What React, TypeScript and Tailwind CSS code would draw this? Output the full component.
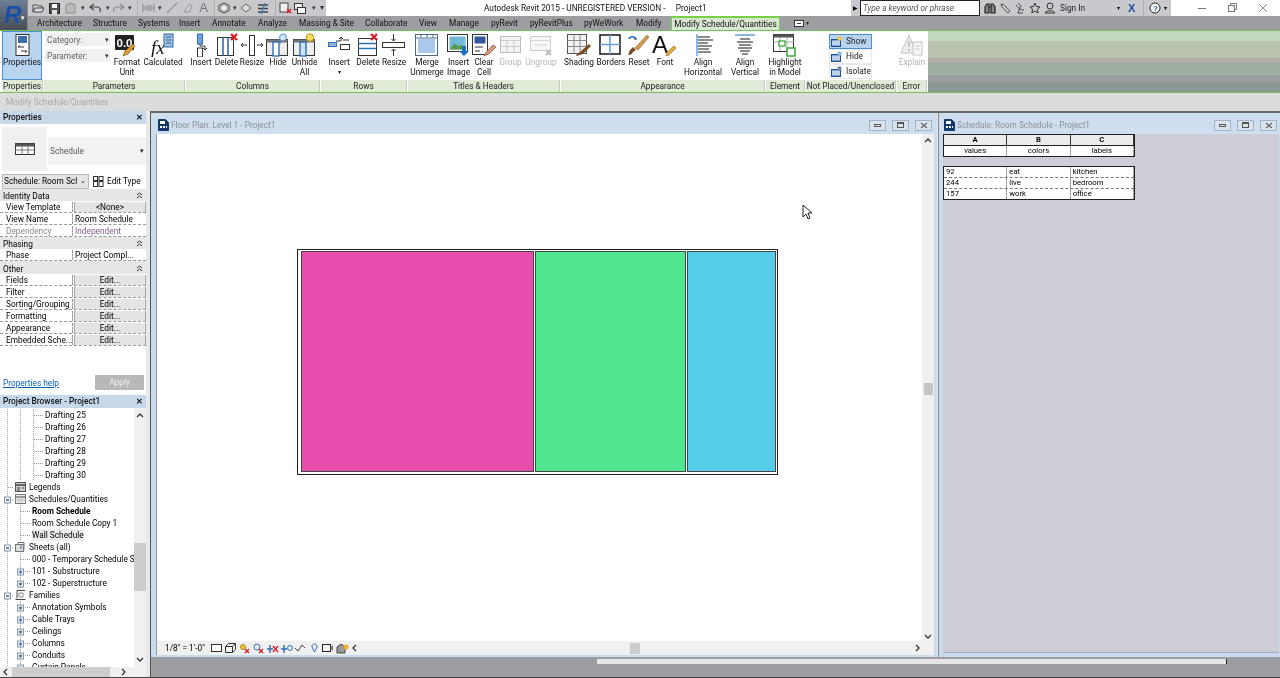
import { FC, ReactNode } from "react";

const FONT = "font-['Roboto','Liberation_Sans',sans-serif]";

type SvgProps = { w?: number; h?: number; children: ReactNode; className?: string };

const Ico: FC<SvgProps> = ({ w = 24, h = 24, children, className }) => (
  <svg width={w} height={h} viewBox={`0 0 ${w} ${h}`} fill="none" className={`shrink-0 ${className ?? ""}`}>
    {children}
  </svg>
);

const INK = "#333";
const BLUE = "#2f6fb5";
const RED = "#d8202a";

/* ── Ribbon icons ─────────────────────────────────── */
const icons: Record<string, ReactNode> = {
  properties: (
    <Ico>
      <rect x="6" y="1.5" width="13" height="21" fill="#fff" stroke={INK} />
      <rect x="8" y="3" width="9" height="7" fill="#3a6ea8" />
      <path d="M8 14h6M11 18h6M8 14l2-1.5M17 18l-2 1.5" stroke={INK} />
    </Ico>
  ),
  format: (
    <Ico w={28}>
      <rect x="2" y="2" width="19" height="15" rx="1" fill="#222" />
      <text x="3.500" y="14" fontSize="11.500" fill="#fff" fontFamily="Liberation Sans" fontWeight="700">0.0</text>
      <path d="M10 23l2-5 8-7 2 2-7 8z" fill="#e0a030" stroke="#704010" strokeWidth=".6" />
    </Ico>
  ),
  calc: (
    <Ico w={28}>
      <text x="2" y="21" fontSize="19" fill="#111" fontFamily="Liberation Serif" fontStyle="italic">fx</text>
      <rect x="15" y="1" width="9" height="13" fill="#9cc0e4" stroke="#35689c" />
      <path d="M17 4h5M17 7h5M17 10h5" stroke="#35689c" />
    </Ico>
  ),
  colInsert: (
    <Ico>
      <rect x="8.500" y="1" width="5" height="10" fill="#6f9fd8" stroke={BLUE} />
      <rect x="8.500" y="15" width="5" height="9" fill="#fff" stroke={INK} />
      <path d="M11 11v2h5v4M14 15l2 2 2-2" stroke={INK} />
    </Ico>
  ),
  colDelete: (
    <Ico>
      <rect x="2.5" y="4.5" width="16" height="18" fill="#fff" stroke={INK} />
      <path d="M8 4.500v18M13 4.500v18" stroke={BLUE} strokeWidth="1.600" />
      <path d="M16 1l6 6M22 1l-6 6" stroke={RED} strokeWidth="2.400" />
    </Ico>
  ),
  colResize: (
    <Ico>
      <rect x="9.500" y="2.500" width="5" height="20" fill="#fff" stroke={INK} />
      <path d="M1 12h6M3 10l-2 2 2 2M23 12h-6M21 10l2 2-2 2" stroke={INK} />
    </Ico>
  ),
  colHide: (
    <Ico w={26}>
      <rect x="1.500" y="6.500" width="21" height="16" fill="#eee" stroke={INK} />
      <rect x="1.500" y="6.500" width="21" height="3" fill="#777" />
      <rect x="8" y="9" width="6" height="14" fill="#fff" stroke={BLUE} strokeWidth="1.400" />
      <circle cx="18" cy="4.500" r="3.500" fill="#cfe6fa" stroke="#5a90c8" />
      <path d="M16 8l-1 3" stroke="#5a90c8" />
    </Ico>
  ),
  colUnhide: (
    <Ico w={26}>
      <rect x="1.500" y="6.500" width="21" height="16" fill="#eee" stroke={INK} />
      <rect x="1.500" y="6.500" width="21" height="3" fill="#777" />
      <rect x="8" y="9" width="6" height="14" fill="#cfe0f4" stroke={BLUE} strokeWidth="1.400" />
      <circle cx="18" cy="4.500" r="3.800" fill="#f7d860" stroke="#c09820" />
    </Ico>
  ),
  rowInsert: (
    <Ico w={26}>
      <rect x="2.500" y="9.500" width="8" height="4" fill="#8fb4e0" stroke={BLUE} />
      <rect x="14.500" y="11.500" width="9" height="5" fill="#fff" stroke={INK} />
      <path d="M10 8h5V5M13 6l2-2 2 2M17 7h6" stroke={INK} />
    </Ico>
  ),
  rowDelete: (
    <Ico>
      <rect x="2.500" y="5.500" width="18" height="17" fill="#fff" stroke={INK} />
      <path d="M2.500 10.500h18M2.500 15.500h18" stroke={BLUE} strokeWidth="1.600" />
      <path d="M15 1l6 6M21 1l-6 6" stroke={RED} strokeWidth="2.400" />
    </Ico>
  ),
  rowResize: (
    <Ico w={26}>
      <rect x="1.500" y="9.500" width="22" height="5" fill="#fff" stroke={INK} />
      <path d="M12.500 1v7M10.500 6l2 2 2-2M12.500 23v-7M10.500 18l2-2 2 2" stroke={INK} />
    </Ico>
  ),
  merge: (
    <Ico w={26}>
      <rect x="1.500" y="1.500" width="22" height="21" fill="#fff" stroke="#4a6a8a" />
      <rect x="4" y="6" width="17" height="14" fill="#a9c9ea" />
      <path d="M1.500 5h22M7 1.500v3M13 1.500v3M19 1.500v3" stroke="#4a6a8a" />
    </Ico>
  ),
  image: (
    <Ico w={26}>
      <rect x="1.500" y="1.500" width="20" height="17" fill="#fff" stroke={INK} />
      <rect x="3.500" y="3.500" width="16" height="13" fill="#72b8d8" />
      <path d="M3.500 16.500l5-6 4 3 3-2 4 5z" fill="#5c9a4a" />
      <path d="M16 13h4v5h3l-5 5-5-5h3z" fill="#2070c0" />
    </Ico>
  ),
  clear: (
    <Ico w={26}>
      <rect x="1.500" y="1.500" width="15" height="20" fill="#fff" stroke={INK} />
      <rect x="3.500" y="3.500" width="11" height="7" fill="#33589c" />
      <path d="M4 14h8M4 18h5" stroke={INK} />
      <path d="M13 23l2-4 7-7 3 2-7 7z" fill="#d89880" stroke="#804020" strokeWidth=".6" />
    </Ico>
  ),
  group: (
    <Ico w={26}>
      <rect x="2.500" y="3.500" width="20" height="16" fill="#f4f4f4" stroke="#bbb" />
      <path d="M2.500 7.500h20M9 7.500v12M16 7.500v12M2.500 13.500h20" stroke="#ccc" />
    </Ico>
  ),
  ungroup: (
    <Ico w={26}>
      <rect x="2.500" y="3.500" width="20" height="14" fill="#f7f7f7" stroke="#ccc" />
      <path d="M2.500 7.500h20M6 12h13" stroke="#d5d5d5" />
      <path d="M18 17l5 5M23 17l-5 5" stroke="#bbb" strokeWidth="2" />
    </Ico>
  ),
  shading: (
    <Ico w={26}>
      <rect x="1.500" y="1.500" width="19" height="19" fill="#f2f2f2" stroke="#555" />
      <path d="M1.500 7.500h19M1.500 13.500h19M8 1.500v19M14 1.500v19" stroke="#888" />
      <path d="M10 23c1-3 3-3 4-4l9-8 2 2-8 8c-2 1-4 1-7 2z" fill="#7a4a22" />
    </Ico>
  ),
  borders: (
    <Ico w={26}>
      <rect x="2" y="2" width="20" height="19" fill="#fff" stroke="#222" strokeWidth="1.600" />
      <path d="M12 2v19M2 11.500h20" stroke="#6ca0dc" strokeWidth="1.600" />
    </Ico>
  ),
  reset: (
    <Ico w={26}>
      <path d="M3 6c1-3 6-3 7 0l-2 0" stroke={BLUE} strokeWidth="1.600" />
      <path d="M2 22c3 0 4-1 5-3l3-2-3-3-3 3c-1 2-1 3-2 5z" fill="#7a4a22" />
      <path d="M9 15L21 2l2 2-11 13z" fill="#d49a50" stroke="#704010" strokeWidth=".5" />
    </Ico>
  ),
  font: (
    <Ico w={26}>
      <text x="0" y="20" fontSize="24" fill="#111" fontFamily="Liberation Sans">A</text>
      <path d="M14 23l1-4 7-6 2 2-7 7z" fill="#e4b040" stroke="#704010" strokeWidth=".5" />
    </Ico>
  ),
  alignH: (
    <Ico>
      <path d="M6 1v22" stroke="#5090d0" strokeWidth="1.300" />
      <path d="M7 4h12M7 7h15M7 10h10M7 13h14M7 16h11M7 19h13" stroke="#666" strokeWidth="1.400" />
    </Ico>
  ),
  alignV: (
    <Ico>
      <path d="M2 2h20" stroke="#5090d0" strokeWidth="1.300" />
      <path d="M7 6h10M4 9h16M6 12h12M5 15h14M7 18h10M9 21h6" stroke="#666" strokeWidth="1.400" />
    </Ico>
  ),
  highlight: (
    <Ico w={26}>
      <rect x="1.500" y="1.500" width="20" height="17" fill="#fff" stroke={INK} />
      <rect x="1.500" y="1.500" width="20" height="3" fill="#555" />
      <path d="M1.500 9h20M8 5v13M15 5v13" stroke="#aaa" />
      <rect x="7" y="8" width="6" height="5" fill="#fff" stroke="#38a838" strokeWidth="1.300" />
      <rect x="15" y="15" width="8" height="8" fill="#fff" stroke="#38a838" strokeWidth="1.500" />
    </Ico>
  ),
  explain: (
    <Ico w={26}>
      <path d="M10 2L2 20h15z" fill="#eee" stroke="#c4c4c4" />
      <path d="M10 8v6M10 16v2" stroke="#bbb" strokeWidth="1.600" />
      <rect x="14" y="9" width="9" height="13" fill="#f6f6f6" stroke="#c4c4c4" />
      <path d="M16 13h5M16 16h5" stroke="#ccc" />
    </Ico>
  ),
};

/* ── Ribbon pieces ────────────────────────────────── */
const RibbonBtn: FC<{ icon: string; w: number; lines: string[]; off?: boolean; caret?: boolean; sel?: boolean }> = ({
  icon,
  w,
  lines,
  off,
  caret,
  sel,
}) => (
  <div
    style={{ width: w }}
    className={`flex flex-col items-center shrink-0 leading-[10px] ${off ? "text-[#b4b4b4]" : "text-[#111]"} ${
      sel ? "bg-[#b9d4ef] border border-[#4d8fd0] pt-[1px]" : "pt-[2px]"
    }`}
  >
    <div className="h-[24px] flex items-center justify-center">{icons[icon]}</div>
    {lines.map(l => (
      <span key={l} className="whitespace-nowrap">
        {l}
      </span>
    ))}
    {caret && <span className="text-[6px] leading-[6px] mt-[2px]">▾</span>}
  </div>
);

const Panel: FC<{ title: string; w: number; children: ReactNode }> = ({ title, w, children }) => (
  <div style={{ width: w }} className="flex flex-col shrink-0 border-r border-white">
    <div className="h-[49px] flex bg-white overflow-hidden">{children}</div>
    <div className="h-[12px] bg-[#dfebd7] border-r border-[#c8c8c8] text-center leading-[12px] text-[#222] whitespace-nowrap overflow-hidden">
      {title}
    </div>
  </div>
);

const TABS: [string, number][] = [
  ["Architecture", 43],
  ["Structure", 32],
  ["Systems", 28],
  ["Insert", 20],
  ["Annotate", 33],
  ["Analyze", 28],
  ["Massing & Site", 53],
  ["Collaborate", 41],
  ["View", 17],
  ["Manage", 29],
  ["pyRevit", 26],
  ["pyRevitPlus", 41],
  ["pyWeWork", 39],
  ["Modify", 23],
];

const QatBtn: FC<{ children: ReactNode; w: number }> = ({ children, w }) => (
  <div style={{ width: w }} className="h-[16px] flex items-center justify-center shrink-0">
    {children}
  </div>
);

const Caret = () => <span className="w-[9px] text-center text-[7px] leading-[16px] text-[#333] shrink-0">▾</span>;
const Sep = () => <div className="w-px h-[16px] bg-[#b0b0b0] mx-[3px] shrink-0" />;

const TopBars = () => (
  <div className="flex h-[30px] shrink-0">
    <div className="w-[28px] h-[30px] shrink-0 bg-gradient-to-b from-[#6d7f96] to-[#4a4d55] flex items-center border-r border-[#888] relative">
      <span className="ml-[4px] font-['Liberation_Sans'] font-bold italic text-[24px] leading-[24px] text-[#1750a8]">R</span>
      <span className="absolute right-[2px] bottom-[8px] text-[7px] leading-[7px] text-white">▾</span>
    </div>
    <div className="flex-1 flex flex-col min-w-0">
      <div className="h-[16px] flex bg-white">
        <div className="w-[298px] flex items-center bg-[#c9c9cd] pl-[2px] shrink-0">
          <QatBtn w={16}>
            <Ico w={12} h={10}><path d="M1 9V2h4l1 1h4v2M1 9l2-4h9l-2 4z" fill="#ddd" stroke="#444" /></Ico>
          </QatBtn>
          <QatBtn w={16}>
            <Ico w={11} h={11}><path d="M.5.5h10v10H.5z" fill="#555" stroke="#222" /><rect x="3" y="1" width="5" height="4" fill="#fff" /><rect x="3" y="7" width="5" height="4" fill="#ddd" /></Ico>
          </QatBtn>
          <QatBtn w={16}>
            <Ico w={12} h={12}><path d="M2 11V3l5-2 4 2v8z" fill="#bbb" stroke="#888" /></Ico>
          </QatBtn>
          <Caret />
          <QatBtn w={16}>
            <Ico w={13} h={10}><path d="M5 1L1 4l4 3M1 4h7c3 0 4 2 3 5" stroke="#444" strokeWidth="1.200" /></Ico>
          </QatBtn>
          <Caret />
          <QatBtn w={13}>
            <Ico w={13} h={10}><path d="M8 1l4 3-4 3M12 4H5C2 4 1 6 2 9" stroke="#888" strokeWidth="1.100" /></Ico>
          </QatBtn>
          <Caret />
          <Sep />
          <QatBtn w={14}>
            <Ico w={13} h={10}><path d="M1 1v8M12 1v8M1 5h11M3 3h7M3 7h7" stroke="#888" /></Ico>
          </QatBtn>
          <Caret />
          <QatBtn w={16}>
            <Ico w={13} h={12}><path d="M2 10l9-9" stroke="#999" strokeWidth="1.400" /><circle cx="2" cy="10" r="1.500" fill="#aaa" /></Ico>
          </QatBtn>
          <QatBtn w={16}>
            <Ico w={12} h={12}><path d="M2 10l5-8 3 2-2 6z" stroke="#999" /></Ico>
          </QatBtn>
          <span className="w-[15px] text-center text-[13px] leading-[16px] text-[#777] font-['Liberation_Sans'] shrink-0">A</span>
          <Sep />
          <QatBtn w={12}>
            <Ico w={12} h={12}><path d="M6 1l5 2.500v5L6 11 1 8.500v-5z" fill="#bbb" stroke="#444" /><circle cx="6" cy="6" r="2" fill="#fff" /></Ico>
          </QatBtn>
          <Caret />
          <QatBtn w={14}>
            <Ico w={12} h={10}><path d="M6 1l5 4-5 4-5-4z" fill="#ddd" stroke="#666" /></Ico>
          </QatBtn>
          <QatBtn w={19}>
            <Ico w={12} h={13}><path d="M1 3h10M1 6.500h10M1 10h10" stroke="#444" strokeWidth="1.300" /><path d="M8 1L4 12" stroke="#3a80d0" strokeWidth="1.300" /></Ico>
          </QatBtn>
          <Sep />
          <QatBtn w={12}>
            <Ico w={13} h={12}><rect x="1" y="1" width="8" height="9" fill="#eee" stroke="#444" /><path d="M8 7l4 4M12 7l-4 4" stroke={RED} strokeWidth="1.600" /></Ico>
          </QatBtn>
          <QatBtn w={18}>
            <Ico w={12} h={11}><rect x=".5" y=".5" width="8" height="6" fill="#eee" stroke="#333" /><rect x="3.500" y="4.500" width="8" height="6" fill="#fff" stroke="#333" /></Ico>
          </QatBtn>
          <Caret />
          <span className="ml-[2px] text-[8px] leading-[16px] text-[#333]">▾</span>
        </div>
        <div className="w-[525px] shrink-0 pl-[158px] leading-[16px] text-[#111] whitespace-pre">
          Autodesk Revit 2015 - UNREGISTERED VERSION -     Project1
        </div>
        <div className="w-[9px] shrink-0 bg-[#c9c9cd] text-[6px] leading-[16px] text-center">▶</div>
        <div className="w-[120px] shrink-0 bg-white border border-[#222] leading-[14px] pl-[2px] italic text-[#555] whitespace-nowrap">
          Type a keyword or phrase
        </div>
        <div className="w-[191px] shrink-0 bg-[#c9c9cd] flex items-center pl-[4px] gap-[3px] leading-[16px]">
          <Ico w={12} h={12}><path d="M1 11V5l2-3h2v9zM11 11V5L9 2H7v9zM5 5h2" stroke="#222" strokeWidth="1.200" fill="#888" /></Ico>
          <Ico w={12} h={12}><path d="M2 2l3 1 6 6-2 2-6-6z" stroke="#555" /></Ico>
          <Ico w={12} h={12}><path d="M2 3c3 4 5 5 8 5M7 3L4 11h5M4 1l2 2" stroke="#444" /></Ico>
          <Ico w={12} h={12}><path d="M6 1l1.500 3.500 3.500.4-2.600 2.400.8 3.700L6 9l-3.200 1.900.8-3.700L1 4.900l3.500-.4z" stroke="#333" /></Ico>
          <Ico w={12} h={12}><circle cx="6" cy="4" r="3" stroke="#333" /><path d="M1 11c1-3 9-3 10 0z" stroke="#333" /></Ico>
          <span className="w-[54px] shrink-0 text-[#222] ml-[1px]">Sign In</span>
          <span className="text-[6px] w-[8px] shrink-0">▾</span>
          <span className="font-['Liberation_Sans'] font-bold text-[11px] text-[#1c4a9c] w-[9px] shrink-0">X</span>
          <Sep />
          <Ico w={12} h={12} className="-ml-[1px]"><circle cx="6" cy="6" r="5" fill="#fff" stroke="#222" /><text x="4" y="9" fontSize="8" fill="#1c4a9c" fontFamily="Liberation Sans" fontWeight="700">?</text></Ico>
          <span className="text-[6px] w-[8px] shrink-0">▾</span>
        </div>
        <div className="flex-1 bg-white flex items-center">
          <Ico w={109} h={16}>
            <path d="M27 8.500h8" stroke="#777" />
            <rect x="57.500" y="5.500" width="6" height="6" stroke="#777" />
            <path d="M59.500 5.500v-2h6v6h-2" stroke="#777" />
            <path d="M88 4l8 8M96 4l-8 8" stroke="#888" />
          </Ico>
        </div>
      </div>
      <div className="h-[14px] bg-[#9d9da2] flex pl-[9px] gap-[13px] leading-[14px] text-[#111] items-center">
        {TABS.map(([t, w]) => (
          <span key={t} style={{ width: w }} className="text-center whitespace-nowrap shrink-0">
            {t}
          </span>
        ))}
        <span className="h-[14px] w-[109px] -ml-[1px] mr-[1px] bg-[#d8e8d0] border-x border-t-2 border-[#78d048] text-center leading-[12px] shrink-0 whitespace-nowrap">
          Modify Schedule/Quantities
        </span>
        <span className="flex items-center gap-[2px] text-[#222]">
          <Ico w={10} h={7}><rect x=".5" y=".5" width="9" height="6" fill="#fff" stroke="#333" /><path d="M3 3.500h4" stroke="#333" /></Ico>
          <span className="text-[6px]">▾</span>
        </span>
      </div>
    </div>
  </div>
);

const Combo: FC<{ label: string }> = ({ label }) => (
  <div className="w-[65px] h-[13px] bg-[#f0f0f0] flex items-center justify-between pl-[2px] pr-[1px] text-[#666] leading-[12px]">
    <span>{label}</span>
    <span className="text-[7px] text-[#333]">▾</span>
  </div>
);

const SmallTool: FC<{ label: string; sel?: boolean; children: ReactNode }> = ({ label, sel, children }) => (
  <div className={`h-[15px] w-[43px] flex items-center gap-[4px] pl-[1px] leading-[13px] text-[#222] ${sel ? "bg-[#b9d4ef] border border-[#4d8fd0]" : "border border-[#e8e8e8]"}`}>
    {children}
    <span>{label}</span>
  </div>
);

const ListIco: FC<{ badge: string }> = ({ badge }) => (
  <Ico w={11} h={11}>
    <rect x=".5" y="3.500" width="9" height="7" fill="#7aa6d8" stroke="#1f4f90" />
    <path d="M1 6h8M1 8h8" stroke="#fff" />
    <circle cx="8.500" cy="2.500" r="2.200" fill={badge} />
  </Ico>
);

const Ribbon = () => (
  <div className="h-[63px] shrink-0 flex border-y border-[#77bf58] bg-white pl-[2px]">
    <Panel title="Properties" w={42}>
      <RibbonBtn icon="properties" w={40} lines={["Properties"]} sel />
    </Panel>
    <Panel title="Parameters" w={142}>
      <div className="w-[66px] pl-[1px] pt-[2px] flex flex-col gap-[3px] shrink-0">
        <Combo label="Category:" />
        <Combo label="Parameter:" />
      </div>
      <RibbonBtn icon="format" w={34} lines={["Format", "Unit"]} />
      <RibbonBtn icon="calc" w={38} lines={["Calculated"]} />
    </Panel>
    <Panel title="Columns" w={135}>
      <div className="w-[2px]" />
      <RibbonBtn icon="colInsert" w={26} lines={["Insert"]} />
      <RibbonBtn icon="colDelete" w={25} lines={["Delete"]} />
      <RibbonBtn icon="colResize" w={26} lines={["Resize"]} />
      <RibbonBtn icon="colHide" w={26} lines={["Hide"]} />
      <RibbonBtn icon="colUnhide" w={27} lines={["Unhide", "All"]} />
    </Panel>
    <Panel title="Rows" w={87}>
      <div className="w-[3px]" />
      <RibbonBtn icon="rowInsert" w={30} lines={["Insert"]} caret />
      <RibbonBtn icon="rowDelete" w={28} lines={["Delete"]} />
      <RibbonBtn icon="rowResize" w={24} lines={["Resize"]} />
    </Panel>
    <Panel title="Titles & Headers" w={153}>
      <RibbonBtn icon="merge" w={38} lines={["Merge", "Unmerge"]} />
      <RibbonBtn icon="image" w={25} lines={["Insert", "Image"]} />
      <RibbonBtn icon="clear" w={26} lines={["Clear", "Cell"]} />
      <RibbonBtn icon="group" w={27} lines={["Group"]} off />
      <RibbonBtn icon="ungroup" w={34} lines={["Ungroup"]} off />
    </Panel>
    <Panel title="Appearance" w={205}>
      <RibbonBtn icon="shading" w={36} lines={["Shading"]} />
      <RibbonBtn icon="borders" w={28} lines={["Borders"]} />
      <RibbonBtn icon="reset" w={28} lines={["Reset"]} />
      <RibbonBtn icon="font" w={24} lines={["Font"]} />
      <div className="w-[3px]" />
      <RibbonBtn icon="alignH" w={46} lines={["Align", "Horizontal"]} />
      <RibbonBtn icon="alignV" w={38} lines={["Align", "Vertical"]} />
    </Panel>
    <Panel title="Element" w={40}>
      <RibbonBtn icon="highlight" w={38} lines={["Highlight", "in Model"]} />
    </Panel>
    <Panel title="Not Placed/Unenclosed" w={91}>
      <div className="pl-[23px] pt-[3px] flex flex-col">
        <SmallTool label="Show" sel><ListIco badge="#f0c840" /></SmallTool>
        <SmallTool label="Hide"><ListIco badge="#8ab8e8" /></SmallTool>
        <SmallTool label="Isolate"><ListIco badge="#7088a8" /></SmallTool>
      </div>
    </Panel>
    <Panel title="Error" w={31}>
      <RibbonBtn icon="explain" w={30} lines={["Explain"]} off />
    </Panel>
    <div className="flex-1 flex flex-col">
      <div className="h-[10px] bg-[#c1d9bf]" />
      <div className="h-[17px] bg-[#b9c3af]" />
      <div className="h-[4px] bg-[#b5adaa]" />
      <div className="h-[13px] bg-[#9fafa1]" />
      <div className="h-[7px] bg-[#9b9da0]" />
      <div className="flex-1 bg-[#8b9895]" />
    </div>
  </div>
);

/* ── Left column ──────────────────────────────────── */
const PaneHeader: FC<{ title: string }> = ({ title }) => (
  <div className="h-[13px] bg-[#c6d8ea] flex items-center justify-between pl-[3px] pr-[3px] font-medium text-[#111] leading-[13px] shrink-0">
    <span>{title}</span>
    <span className="font-bold text-[8px]">✕</span>
  </div>
);

const Collapse = () => (
  <Ico w={7} h={7}>
    <path d="M1 3l2.500-2L6 3M1 6l2.500-2L6 6" stroke="#333" />
  </Ico>
);

const Group: FC<{ title: string }> = ({ title }) => (
  <div className="h-[12px] bg-[#e6e6e6] flex justify-between items-center pl-[3px] pr-[3px] text-[#000] leading-[12px] pt-[1px]">
    <span>{title}</span>
    <Collapse />
  </div>
);

const Row: FC<{ k: string; v: string; btn?: boolean; dim?: boolean }> = ({ k, v, btn, dim }) => (
  <div className="h-[12px] flex border-b border-dashed border-[#999] leading-[11px] pt-[1px]">
    <div className={`w-[73px] pl-[6px] border-r border-dashed border-[#999] whitespace-nowrap overflow-hidden ${dim ? "text-[#8a8a8a]" : "text-[#000]"}`}>
      {k}
    </div>
    {btn ? (
      <div className="flex-1 ml-[1px] bg-[#e4e4e4] border-x border-[#aaa] text-center text-[#000]">{v}</div>
    ) : (
      <div className={`flex-1 pl-[2px] whitespace-nowrap ${dim ? "text-[#805d8c]" : "text-[#000]"}`}>{v}</div>
    )}
  </div>
);

const PropertiesPane = () => (
  <div className="h-[284px] flex flex-col shrink-0 bg-white">
    <PaneHeader title="Properties" />
    <div className="h-[47px] flex items-center shrink-0 pt-[3px]">
      <div className="ml-[2px] w-[45px] h-[44px] bg-[#f0f0f0] flex items-center justify-center shrink-0">
        <Ico w={22} h={14}>
          <rect x="1.500" y="1.500" width="19" height="11" fill="#fff" stroke="#333" />
          <rect x="1.500" y="1.500" width="19" height="3" fill="#555" />
          <path d="M8 4.500v8M14 4.500v8M1.500 8h19" stroke="#777" />
        </Ico>
      </div>
      <div className="flex-1 ml-[1px] mt-[4px] h-[28px] bg-[#f3f3f3] flex items-center justify-between pl-[2px] pr-[2px] text-[#5b5b5b]">
        <span>Schedule</span>
        <span className="text-[7px] text-[#222]">▾</span>
      </div>
    </div>
    <div className="h-[15px] flex items-center shrink-0 mt-[3px] pl-[2px]">
      <div className="w-[87px] h-[15px] bg-[#e4e4e4] border border-[#bbb] flex justify-between items-center pl-[1px] pr-[2px] leading-[13px] text-[#000] overflow-hidden whitespace-nowrap">
        <span className="w-[73px] overflow-hidden">Schedule: Room Sche</span>
        <span className="text-[7px]">⌄</span>
      </div>
      <div className="flex items-center gap-[3px] pl-[4px] text-[#000]">
        <Ico w={11} h={11}>
          <rect x=".5" y=".5" width="4" height="4" stroke="#333" />
          <rect x="6" y=".5" width="4" height="4" stroke="#333" />
          <rect x=".5" y="5.500" width="4" height="5" stroke="#333" />
          <rect x="6" y="5.500" width="4" height="5" stroke="#333" />
        </Ico>
        <span>Edit Type</span>
      </div>
    </div>
    <Group title="Identity Data" />
    <Row k="View Template" v="<None>" btn />
    <Row k="View Name" v="Room Schedule" />
    <Row k="Dependency" v="Independent" dim />
    <Group title="Phasing" />
    <Row k="Phase" v="Project Compl..." />
    <div className="h-[1px] bg-[#e6e6e6]" />
    <Group title="Other" />
    <Row k="Fields" v="Edit..." btn />
    <Row k="Filter" v="Edit..." btn />
    <Row k="Sorting/Grouping" v="Edit..." btn />
    <Row k="Formatting" v="Edit..." btn />
    <Row k="Appearance" v="Edit..." btn />
    <Row k="Embedded Sche..." v="Edit..." btn />
    <div className="flex-1 flex items-end pb-[5px]">
      <div className="w-full flex items-center justify-between pl-[3px] pr-[2px]">
        <span className="text-[#0a5cc0] underline leading-[14px]">Properties help</span>
        <span className="w-[49px] h-[15px] bg-[#b8b8b8] text-center text-[#eee] leading-[15px]">Apply</span>
      </div>
    </div>
  </div>
);

type TreeIcon = "legend" | "sched" | "sheet" | "fam";
type Tree = { t: string; d: 0 | 1 | 2; box?: "+" | "-"; bold?: boolean; sel?: boolean; ico?: TreeIcon };

const TREE: Tree[] = [
  ...[25, 26, 27, 28, 29, 30].map(n => ({ t: `Drafting ${n}`, d: 2 as const })),
  { t: "Legends", d: 0, ico: "legend" },
  { t: "Schedules/Quantities", d: 0, box: "-", ico: "sched" },
  { t: "Room Schedule", d: 1, bold: true },
  { t: "Room Schedule Copy 1", d: 1 },
  { t: "Wall Schedule", d: 1, sel: true },
  { t: "Sheets (all)", d: 0, box: "-", ico: "sheet" },
  { t: "000 - Temporary Schedule Sh", d: 1 },
  { t: "101 - Substructure", d: 1, box: "+" },
  { t: "102 - Superstructure", d: 1, box: "+" },
  { t: "Families", d: 0, box: "-", ico: "fam" },
  { t: "Annotation Symbols", d: 1, box: "+" },
  { t: "Cable Trays", d: 1, box: "+" },
  { t: "Ceilings", d: 1, box: "+" },
  { t: "Columns", d: 1, box: "+" },
  { t: "Conduits", d: 1, box: "+" },
  { t: "Curtain Panels", d: 1, box: "+" },
];

const treeIcons: Record<TreeIcon, ReactNode> = {
  legend: (
    <>
      <rect x="15.500" y="1.500" width="10" height="9" fill="#ccc" stroke="#555" />
      <path d="M15.500 4h10" stroke="#444" strokeWidth="1.500" />
      <path d="M17 7h3M22 7h2M17 9h3" stroke="#444" />
    </>
  ),
  sched: (
    <>
      <rect x="15.500" y="1.500" width="10" height="9" fill="#eee" stroke="#777" />
      <path d="M15.500 4h10" stroke="#666" strokeWidth="1.300" />
      <path d="M19 4v6M22 4v6M15.500 7h10" stroke="#bbb" />
    </>
  ),
  sheet: (
    <>
      <rect x="15.500" y="3.500" width="8" height="7" fill="#ddd" stroke="#777" />
      <path d="M18 3.500v-2h6v7" stroke="#777" />
      <path d="M20 5h2M20 7h2" stroke="#3a70b8" />
    </>
  ),
  fam: (
    <>
      <path d="M17 9.500V1.500h8M15.500 10.500h10" stroke="#444" />
      <path d="M19 4h4v4h-4z" stroke="#888" />
    </>
  ),
};

const TreeRow: FC<{ n: Tree }> = ({ n }) => {
  const gutter = n.d === 2 ? 45 : n.d === 1 ? 32 : 29;
  const bx = n.d === 1 ? 20 : 7;
  return (
    <div className="h-[12px] flex leading-[12px] text-[#000] whitespace-nowrap shrink-0">
      <Ico w={gutter} h={12}>
        <path d="M7.500 0v12" stroke="#aaa" strokeDasharray="1 1" />
        {n.d === 2 && <path d="M20.500 0v12M33.500 0v12M34 6.500h9" stroke="#999" strokeDasharray="1 1" />}
        {n.d === 1 && <path d="M20.500 0v12M21 6.500h9" stroke="#999" strokeDasharray="1 1" />}
        {n.d === 0 && <path d="M8 6.500h6" stroke="#999" strokeDasharray="1 1" />}
        {n.box && (
          <>
            <rect x={bx - 2.5} y="4" width="6" height="6" fill="#e8eef6" stroke="#8a97a8" />
            <path d={`M${bx - 1} 7h3`} stroke="#223" />
            {n.box === "+" && <path d={`M${bx + 0.5} 5.500v3`} stroke="#2b5aa8" />}
          </>
        )}
        {n.ico && treeIcons[n.ico]}
      </Ico>
      <span className={`${n.bold ? "font-bold" : ""} ${n.sel ? "bg-[#ececec]" : ""}`}>{n.t}</span>
    </div>
  );
};

const BrowserPane = () => (
  <div className="flex-1 flex flex-col min-h-0 bg-white">
    <PaneHeader title="Project Browser - Project1" />
    <div className="flex-1 flex min-h-0">
      <div className="flex-1 overflow-hidden flex flex-col pt-[1px] min-w-0">
        {TREE.map(n => (
          <TreeRow key={n.t} n={n} />
        ))}
      </div>
      <div className="w-[12px] bg-[#f0f0f0] flex flex-col items-center shrink-0 pt-[4px]">
        <Ico w={8} h={6}><path d="M1 5l3-3 3 3" stroke="#333" strokeWidth="1.300" /></Ico>
        <div className="h-[48px] w-full bg-[#cdcdcd] mt-[125px] shrink-0" />
        <Ico w={8} h={6} className="mt-[66px]"><path d="M1 1l3 3 3-3" stroke="#333" strokeWidth="1.300" /></Ico>
      </div>
    </div>
    <div className="h-[10px] bg-[#f0f0f0] flex items-center shrink-0 pr-[10px]">
      <div className="w-[12px] flex justify-center">
        <Ico w={6} h={8}><path d="M4 1L1 4l3 3" stroke="#333" strokeWidth="1.300" /></Ico>
      </div>
      <div className="w-[98px] h-[10px] bg-[#cdcdcd]" />
      <div className="flex-1 flex justify-center">
        <Ico w={6} h={8}><path d="M2 1l3 3-3 3" stroke="#333" strokeWidth="1.300" /></Ico>
      </div>
    </div>
  </div>
);

/* ── Document windows ─────────────────────────────── */
const WinBtn: FC<{ children: ReactNode }> = ({ children }) => (
  <div className="w-[17px] h-[11px] bg-[#dbe3ec] border border-[#9fb4ca] flex items-center justify-center">{children}</div>
);

const WinBtns = () => (
  <div className="flex gap-[6px]">
    <WinBtn><div className="w-[7px] h-[3px] border border-[#555]" /></WinBtn>
    <WinBtn><div className="w-[7px] h-[6px] border border-[#555] border-t-2" /></WinBtn>
    <WinBtn>
      <Ico w={8} h={7}><path d="M1 1l6 5M7 1L1 6" stroke="#666" strokeWidth="1.300" /></Ico>
    </WinBtn>
  </div>
);

const DocIco = () => (
  <Ico w={11} h={12}>
    <path d="M.5.500h7l3 3v8H.5z" fill="#12386e" stroke="#12386e" />
    <path d="M2 2h5v3H2z" fill="#fff" />
    <path d="M2 8h7" stroke="#fff" strokeWidth="2" strokeDasharray="2 1" />
  </Ico>
);

const TitleBar: FC<{ title: string; narrow?: boolean }> = ({ title, narrow }) => (
  <div className={`h-[21px] shrink-0 flex items-center justify-between pt-[3px] bg-[#d0dfef] ${narrow ? "pl-[5px] pr-[3px]" : "pl-[7px] pr-[5px]"}`}>
    <div className="flex items-center text-[#8c8f94]">
      <DocIco />
      <span className="ml-[2px]">{title}</span>
    </div>
    <WinBtns />
  </div>
);

const FloorPlan = () => (
  <div className="flex-1 flex flex-col items-start pl-[140px] pt-[115px] min-w-0 bg-white">
    <div className="w-[481px] h-[226px] border border-[#222] flex pl-[3px] pr-[1px] pt-[1px] pb-[2px] gap-[1px] bg-white">
      <div className="w-[233px] shrink-0 bg-[#e84cac] border border-[#444]" />
      <div className="w-[151px] shrink-0 bg-[#50e690] border border-[#444]" />
      <div className="w-[89px] shrink-0 bg-[#55cde8] border border-[#444]" />
    </div>
  </div>
);

const STATUS_ICONS: ReactNode[] = [
  <Ico w={11} h={9}><rect x=".5" y=".5" width="10" height="7" fill="#fff" stroke="#333" /></Ico>,
  <Ico w={11} h={10}><path d="M.5 3.500h7v6h-7zM.5 3.500l3-3h7l-3 3M7.500 9.500l3-3v-6" stroke="#333" /></Ico>,
  <Ico w={11} h={11}><circle cx="4" cy="4" r="2.500" fill="#f0c840" stroke="#a88820" /><path d="M6 6l4 4M10 6l-4 4" stroke={RED} strokeWidth="1.400" /></Ico>,
  <Ico w={11} h={11}><circle cx="4" cy="4" r="3" stroke={BLUE} /><path d="M6 6l4 4M10 6l-4 4" stroke={RED} strokeWidth="1.400" /></Ico>,
  <Ico w={13} h={11}><path d="M1 6h6M4 2v8" stroke={BLUE} strokeWidth="1.500" /><path d="M7 3l5 6M12 3L7 9" stroke={RED} strokeWidth="1.400" /></Ico>,
  <Ico w={13} h={11}><path d="M1 6h6M4 2v8" stroke={BLUE} strokeWidth="1.500" /><circle cx="10" cy="5" r="2.500" stroke={BLUE} /></Ico>,
  <Ico w={12} h={10}><path d="M1 5l3 3 4-6 3 3" stroke="#444" /></Ico>,
  <Ico w={7} h={11}><path d="M3.500 1A2.500 2.500 0 016 4L3.500 9 1 4a2.500 2.500 0 012.500-3z" stroke={BLUE} /></Ico>,
  <Ico w={12} h={10}><rect x=".5" y="1.500" width="8" height="7" stroke="#222" /><path d="M8 5l3-3v6z" fill="#777" /></Ico>,
  <Ico w={13} h={11}><path d="M1 10V4l4-3 4 3v6z" fill="#999" stroke="#444" /><circle cx="10" cy="4" r="2.500" fill="#f0b030" /></Ico>,
];

const ViewBar = () => (
  <div className="h-[14px] shrink-0 bg-[#f0f0f0] flex items-center pl-[8px] text-[#000] leading-[14px]">
    <span className="w-[44px] shrink-0 whitespace-nowrap">1/8" = 1'-0"</span>
    {STATUS_ICONS.map((ic, i) => (
      <span key={i} className="w-[14px] flex justify-center shrink-0">
        {ic}
      </span>
    ))}
    <Ico w={6} h={8} className="ml-[3px]"><path d="M4 1L1 4l3 3" stroke="#333" strokeWidth="1.300" /></Ico>
    <div className="w-[10px] h-[11px] bg-[#cdcdcd] ml-[272px]" />
    <Ico w={6} h={8} className="ml-[274px]"><path d="M2 1l3 3-3 3" stroke="#333" strokeWidth="1.300" /></Ico>
  </div>
);

const ViewWindow = () => (
  <div className="w-[787px] shrink-0 flex flex-col bg-[#c8dbef] border-l border-[#555]">
    <TitleBar title="Floor Plan: Level 1 - Project1" />
    <div className="flex-1 ml-[5px] mr-[3px] mb-[2px] flex flex-col min-h-0 border-l border-[#999]">
      <div className="flex-1 flex min-h-0">
        <FloorPlan />
        <div className="w-[12px] bg-[#f0f0f0] flex flex-col items-center shrink-0 pt-[3px]">
          <Ico w={8} h={6}><path d="M1 5l3-3 3 3" stroke="#333" strokeWidth="1.300" /></Ico>
          <div className="w-[9px] h-[12px] bg-[#c4c4c4] mt-[240px] shrink-0" />
          <Ico w={8} h={6} className="mt-[239px]"><path d="M1 1l3 3 3-3" stroke="#333" strokeWidth="1.300" /></Ico>
        </div>
      </div>
      <ViewBar />
    </div>
  </div>
);

const Cell: FC<{ children: ReactNode; head?: boolean }> = ({ children, head }) => (
  <div className={`w-[64px] h-[10px] leading-[10px] whitespace-nowrap border-r border-dashed border-[#999] ${head ? "text-center" : "pl-[2px]"}`}>
    {children}
  </div>
);

const ScheduleWindow = () => (
  <div className="flex-1 flex flex-col bg-[#c8dbef] border-l border-[#888] ml-[1px] min-w-0">
    <TitleBar title="Schedule: Room Schedule - Project1" narrow />
    <div className="flex-1 ml-[4px] mr-[1px] mb-[4px] bg-[#cdcdd7] border-b border-[#aaa] text-[7.700px] text-[#000] min-h-0">
      <div className="w-[192px] border-t border-x border-[#222] flex bg-[#ececec] font-bold">
        {["A", "B", "C"].map(c => (
          <div key={c} className="w-[64px] h-[10px] text-center leading-[10px] border-r border-[#333]">
            {c}
          </div>
        ))}
      </div>
      <div className="w-[192px] border border-[#222] flex bg-white">
        {["values", "colors", "labels"].map(c => (
          <Cell key={c} head>
            {c}
          </Cell>
        ))}
      </div>
      <div className="h-[9px]" />
      <div className="w-[192px] border border-[#222] bg-white">
        {[
          ["92", "eat", "kitchen"],
          ["244", "live", "bedroom"],
          ["157", "work", "office"],
        ].map((r, i) => (
          <div key={r[0]} className={`flex ${i < 2 ? "border-b border-dashed border-[#777]" : ""}`}>
            {r.map(c => (
              <Cell key={c}>{c}</Cell>
            ))}
          </div>
        ))}
      </div>
    </div>
  </div>
);

export default function App() {
  return (
    <div className={`w-[1280px] h-[678px] overflow-hidden flex flex-col bg-[#9d9da2] text-[8.300px] relative blur-[0.3px] ${FONT}`}>
      <TopBars />
      <Ribbon />
      <div className="h-[18px] shrink-0 bg-[#dcdcdc] pl-[6px] leading-[18px] text-[#a8a8a8]">Modify Schedule/Quantities</div>
      <div className="flex-1 flex min-h-0 bg-[#e8e8e8]">
        <div className="w-[150px] shrink-0 flex flex-col min-h-0 pr-[4px] border-b border-[#444]">
          <PropertiesPane />
          <BrowserPane />
        </div>
        <div className="flex-1 flex flex-col min-w-0">
          <div className="h-[546px] shrink-0 flex border-t-2 border-[#666]">
            <ViewWindow />
            <ScheduleWindow />
          </div>
          <div className="flex-1 flex flex-col bg-[#9d9da2] border-l border-[#555] border-b border-b-[#444]">
            <div className="h-[2px]" />
            <div className="h-[5px] flex">
              <div className="w-[446px]" />
              <div className="w-[630px] bg-[#e6e6e6] border-r border-[#222]" />
            </div>
          </div>
        </div>
      </div>
      <Ico w={12} h={18} className="absolute left-[802px] top-[204px]">
        <path d="M1 1v12l3-3 2 5 2-1-2-5h4z" fill="#fff" stroke="#222" />
      </Ico>
    </div>
  );
}
